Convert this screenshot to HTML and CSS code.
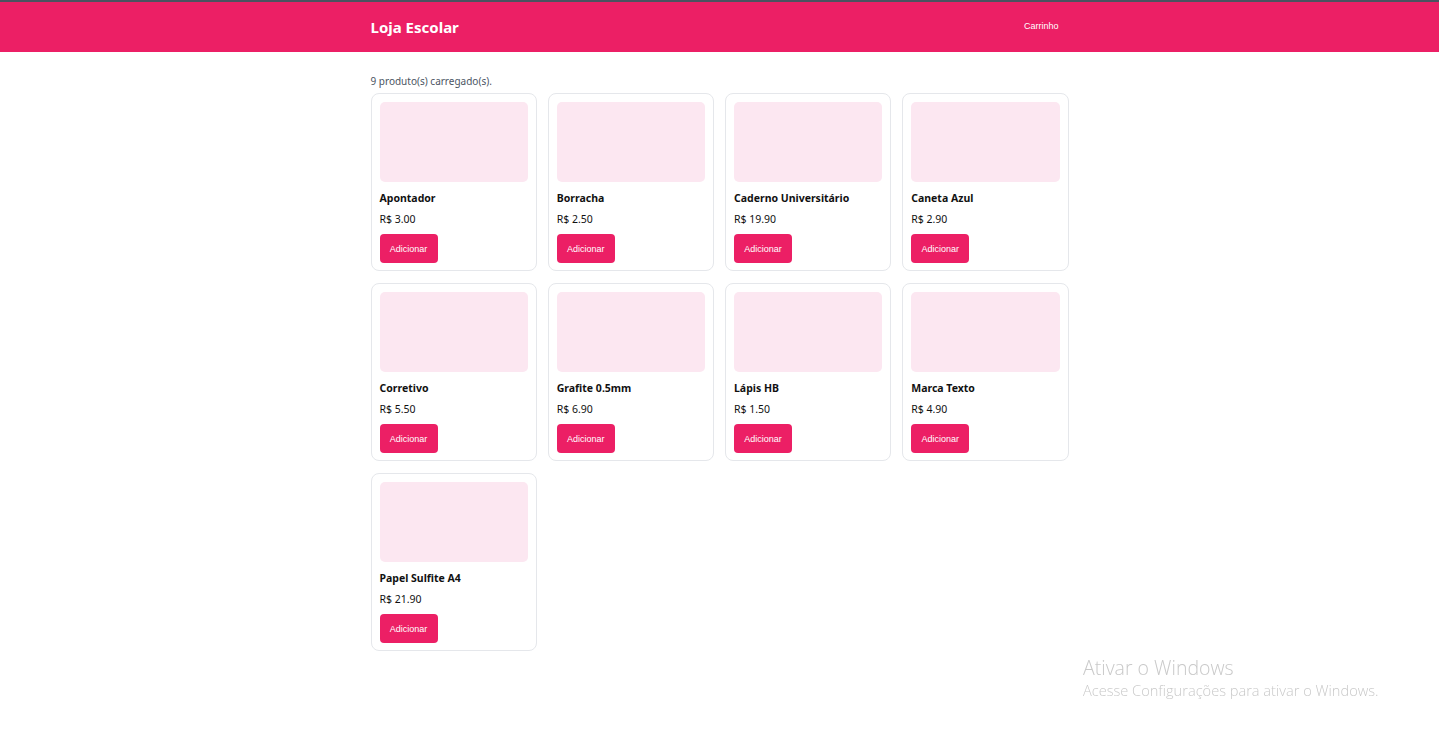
FILE: index.html
```html
<!DOCTYPE html>
<html lang="pt-BR">
<head>
<meta charset="utf-8">
<title>Loja Escolar</title>
<link rel="stylesheet" href="styles.css">
</head>
<body>
<header class="topbar">
  <div class="topbar-inner">
    <h1 class="brand">Loja Escolar</h1>
    <button class="cart-btn">Carrinho</button>
  </div>
</header>
<main class="content">
  <p class="status">9 produto(s) carregado(s).</p>
  <div class="grid">
    <div class="card"><div class="thumb"></div><h3 class="name">Apontador</h3><p class="price">R$ 3.00</p><button class="add">Adicionar</button></div>
    <div class="card"><div class="thumb"></div><h3 class="name">Borracha</h3><p class="price">R$ 2.50</p><button class="add">Adicionar</button></div>
    <div class="card"><div class="thumb"></div><h3 class="name">Caderno Universitário</h3><p class="price">R$ 19.90</p><button class="add">Adicionar</button></div>
    <div class="card"><div class="thumb"></div><h3 class="name">Caneta Azul</h3><p class="price">R$ 2.90</p><button class="add">Adicionar</button></div>
    <div class="card"><div class="thumb"></div><h3 class="name">Corretivo</h3><p class="price">R$ 5.50</p><button class="add">Adicionar</button></div>
    <div class="card"><div class="thumb"></div><h3 class="name">Grafite 0.5mm</h3><p class="price">R$ 6.90</p><button class="add">Adicionar</button></div>
    <div class="card"><div class="thumb"></div><h3 class="name">Lápis HB</h3><p class="price">R$ 1.50</p><button class="add">Adicionar</button></div>
    <div class="card"><div class="thumb"></div><h3 class="name">Marca Texto</h3><p class="price">R$ 4.90</p><button class="add">Adicionar</button></div>
    <div class="card"><div class="thumb"></div><h3 class="name">Papel Sulfite A4</h3><p class="price">R$ 21.90</p><button class="add">Adicionar</button></div>
  </div>
</main>
<div class="watermark">
  <div class="wm-title">Ativar o Windows</div>
  <div class="wm-sub">Acesse Configurações para ativar o Windows.</div>
</div>
</body>
</html>
```
FILE: styles.css
```css
* { box-sizing: border-box; }
html, body { margin: 0; padding: 0; }
body {
  font-family: "Noto Sans", "Open Sans", sans-serif;
  background: #ffffff;
  color: #111827;
}
.topbar {
  background: #ec1f65;
  border-top: 2px solid #4b5260;
  height: 52px;
}
.topbar-inner {
  width: 698px;
  margin: 0 auto;
  height: 100%;
  display: flex;
  align-items: center;
  justify-content: space-between;
}
.brand {
  margin: 0;
  color: #fff;
  font-size: 15px;
  font-weight: 700;
}
.cart-btn {
  background: transparent;
  border: none;
  color: #fff;
  font-family: "Liberation Sans", Arial, sans-serif;
  font-size: 9px;
  padding: 6px 10px;
  margin-bottom: 2px;
  cursor: pointer;
}
.content {
  width: 698px;
  margin: 0 auto;
  padding-top: 22px;
}
.status {
  margin: 0 0 4px;
  font-size: 10px;
  line-height: 15px;
  color: #4b5563;
}
.grid {
  display: grid;
  grid-template-columns: repeat(4, 1fr);
  gap: 12px 11px;
}
.card {
  border: 1px solid #e5e7eb;
  border-radius: 8px;
  padding: 8px;
  height: 178px;
}
.thumb {
  height: 80px;
  background: #fce7f1;
  border-radius: 5px;
}
.name {
  margin: 9px 0 0;
  font-size: 10.5px;
  line-height: 15px;
  font-weight: 700;
  color: #111;
}
.price {
  margin: 6px 0 0;
  font-size: 10.5px;
  line-height: 14px;
  color: #111;
}
.add {
  margin-top: 8px;
  background: #ec1f65;
  color: #fff;
  border: none;
  border-radius: 4px;
  width: 58px;
  height: 29px;
  font-family: "Liberation Sans", Arial, sans-serif;
  font-size: 9px;
  padding: 0;
  cursor: pointer;
}
.watermark {
  position: fixed;
  left: 1083px;
  top: 656px;
  font-family: "Open Sans", sans-serif;
  color: #c9c9c9;
  font-weight: 300;
}
.wm-title { font-size: 19.5px; line-height: 24px; }
.wm-sub { font-size: 14.6px; line-height: 21px; }
```
